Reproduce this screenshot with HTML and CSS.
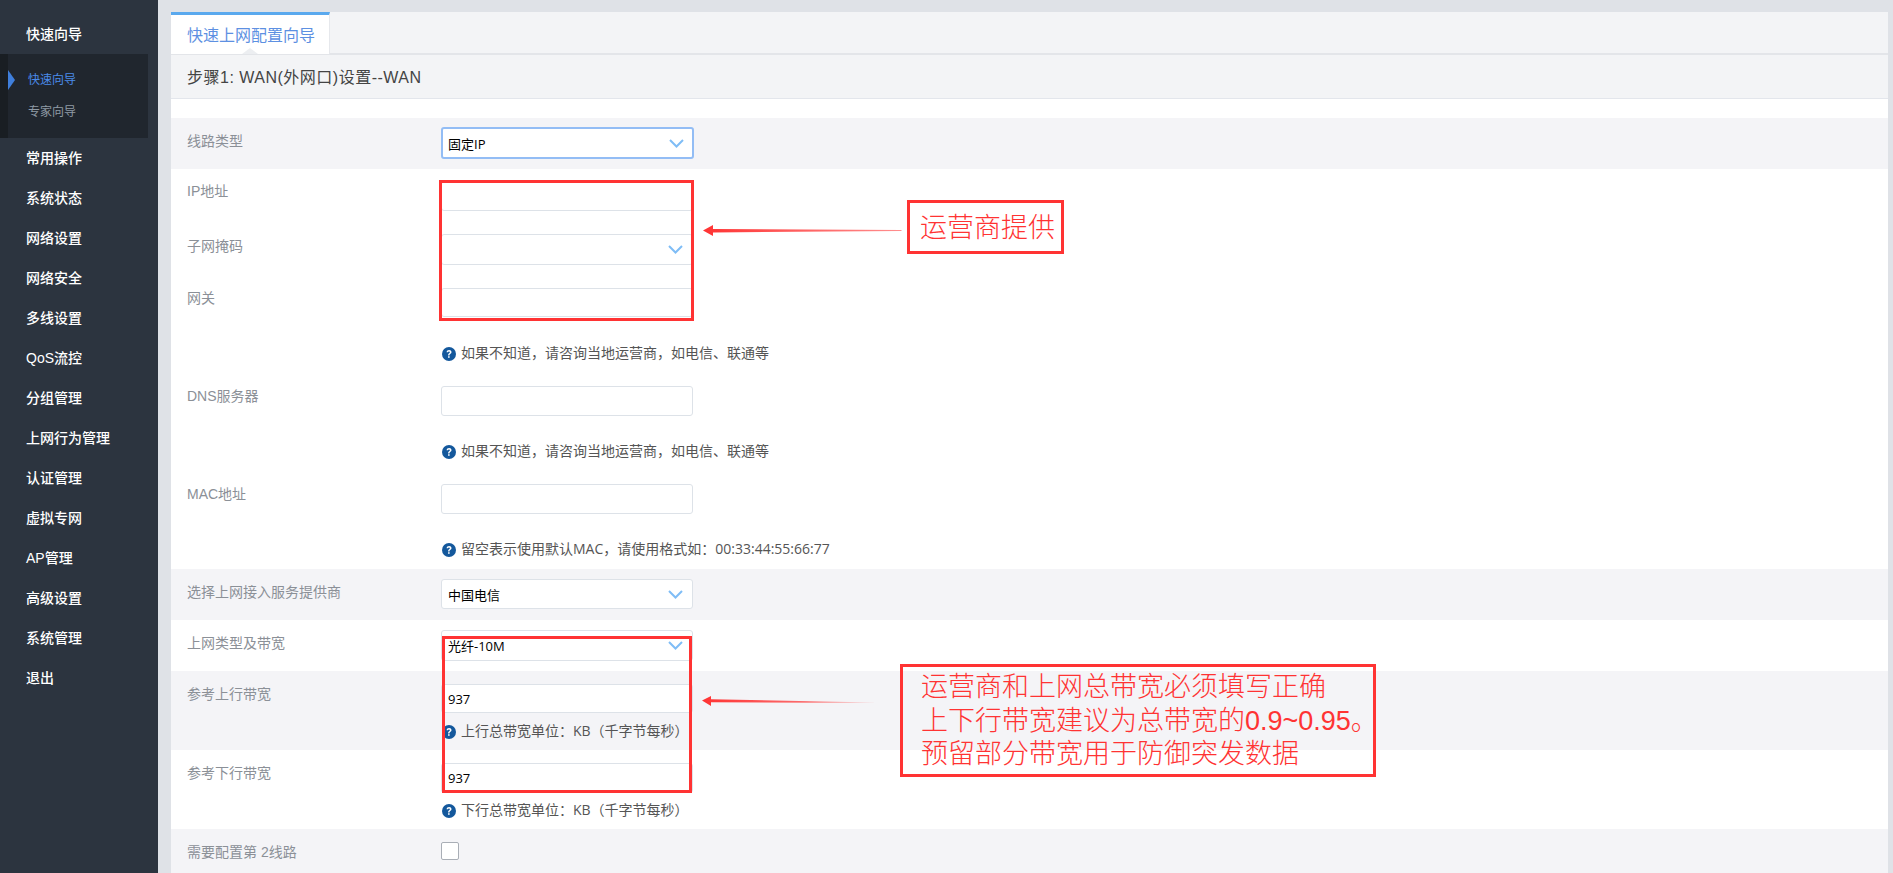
FILE: index.html
```html
<!DOCTYPE html>
<html lang="zh-CN">
<head>
<meta charset="utf-8">
<title>快速上网配置向导</title>
<link rel="stylesheet" href="styles.css">
</head>
<body>
<svg class="defs" width="0" height="0" aria-hidden="true">
  <defs>
    <symbol id="chev" viewBox="0 0 15 9"><path d="M1 1l6.5 6.5L14 1" fill="none" stroke="#7fbdf6" stroke-width="2"/></symbol>
    <symbol id="help" viewBox="0 0 14 14"><circle cx="7" cy="7" r="7" fill="#14589c"/><path d="M4.600 5.300C4.700 3.900 5.700 3.100 7.100 3.100c1.400 0 2.400.8 2.400 2 0 1-.6 1.500-1.200 1.900-.6.4-.8.7-.8 1.400H6.100c0-1.100.3-1.600 1-2.100.5-.4.8-.6.8-1.100 0-.5-.4-.8-.9-.8-.6 0-.9.4-1 .9H4.600z" fill="#fff"/><rect x="6.100" y="9.200" width="1.500" height="1.600" fill="#fff"/></symbol>
    <linearGradient id="fade" x1="0" x2="1" y1="0" y2="0">
      <stop offset="0" stop-color="#f33"/><stop offset=".55" stop-color="#f33" stop-opacity=".75"/><stop offset="1" stop-color="#f33" stop-opacity=".55"/>
    </linearGradient>
    <linearGradient id="fade2" x1="0" x2="1" y1="0" y2="0">
      <stop offset="0" stop-color="#f33"/><stop offset=".6" stop-color="#f33" stop-opacity=".7"/><stop offset="1" stop-color="#f33" stop-opacity=".05"/>
    </linearGradient>
  </defs>
</svg>

<aside class="sidebar">
  <nav class="menu">
    <a class="menu-item">快速向导</a>
    <div class="submenu">
      <a class="sub-item sub-item--active">快速向导</a>
      <a class="sub-item">专家向导</a>
    </div>
    <a class="menu-item">常用操作</a>
    <a class="menu-item">系统状态</a>
    <a class="menu-item">网络设置</a>
    <a class="menu-item">网络安全</a>
    <a class="menu-item">多线设置</a>
    <a class="menu-item">QoS流控</a>
    <a class="menu-item">分组管理</a>
    <a class="menu-item">上网行为管理</a>
    <a class="menu-item">认证管理</a>
    <a class="menu-item">虚拟专网</a>
    <a class="menu-item">AP管理</a>
    <a class="menu-item">高级设置</a>
    <a class="menu-item">系统管理</a>
    <a class="menu-item">退出</a>
  </nav>
</aside>

<main class="main">
  <div class="card">
    <div class="tabs"><div class="tab">快速上网配置向导</div></div>
    <h1 class="step">步骤1: WAN(外网口)设置--WAN</h1>

    <section class="row row--band row--type">
      <label class="label">线路类型</label>
      <div class="ctl ctl--focus ctl--h32"><span>固定IP</span><svg class="chev"><use href="#chev"/></svg></div>
    </section>

    <section class="group">
      <div class="row row--field">
        <label class="label">IP地址</label>
        <div class="ctl"></div>
      </div>
      <div class="row row--field">
        <label class="label label--low">子网掩码</label>
        <div class="ctl ctl--h31"><span></span><svg class="chev"><use href="#chev"/></svg></div>
      </div>
      <div class="row">
        <label class="label">网关</label>
        <div class="ctl ctl--h29"></div>
      </div>
      <div class="tip tip--gap27"><svg class="help"><use href="#help"/></svg>如果不知道，请咨询当地运营商，如电信、联通等</div>
      <div class="row row--after-tip">
        <label class="label">DNS服务器</label>
        <div class="ctl"></div>
      </div>
      <div class="tip tip--gap26"><svg class="help"><use href="#help"/></svg>如果不知道，请咨询当地运营商，如电信、联通等</div>
      <div class="row row--after-tip">
        <label class="label">MAC地址</label>
        <div class="ctl"></div>
      </div>
      <div class="tip tip--gap26"><svg class="help"><use href="#help"/></svg>留空表示使用默认MAC，请使用格式如：00:33:44:55:66:77</div>
    </section>

    <section class="row row--band row--isp">
      <label class="label label--drop">选择上网接入服务提供商</label>
      <div class="ctl"><span>中国电信</span><svg class="chev"><use href="#chev"/></svg></div>
    </section>

    <section class="row row--plain row--line">
      <label class="label label--drop">上网类型及带宽</label>
      <div class="ctl ctl--h31"><span>光纤-10M</span><svg class="chev"><use href="#chev"/></svg></div>
    </section>

    <section class="stack stack--band stack--up">
      <div class="row">
        <label class="label">参考上行带宽</label>
        <div class="ctl ctl--h29"><span>937</span></div>
      </div>
      <div class="tip tip--gap9"><svg class="help"><use href="#help"/></svg>上行总带宽单位：KB（千字节每秒）</div>
    </section>

    <section class="stack stack--down">
      <div class="row">
        <label class="label">参考下行带宽</label>
        <div class="ctl"><span>937</span></div>
      </div>
      <div class="tip tip--gap8"><svg class="help"><use href="#help"/></svg>下行总带宽单位：KB（千字节每秒）</div>
    </section>

    <section class="stack stack--band stack--second">
      <div class="row">
        <label class="label">需要配置第 2线路</label>
        <span class="check"></span>
      </div>
      <div class="tip tip--gap9"><svg class="help"><use href="#help"/></svg>勾选此选项后可配置第二条线路，配置后请在多线设置页面中完成线路参数</div>
    </section>
  </div>
</main>

<div class="mark mark--a"></div>
<svg class="arrow arrow--a" viewBox="0 0 199 11"><path d="M0 5.500L10 0V4L198.500 5V6L10 7.500V11z" fill="url(#fade)"/></svg>
<div class="note note--a">运营商提供</div>

<div class="mark mark--b"></div>
<svg class="arrow arrow--b" viewBox="0 0 172 10"><path d="M0 4.500L9 0V3.200L172 6.500V7L9 6.200V10z" fill="url(#fade2)"/></svg>
<div class="note note--b">运营商和上网总带宽必须填写正确<br>上下行带宽建议为总带宽的0.9~0.95。<br>预留部分带宽用于防御突发数据</div>
</body>
</html>
```

FILE: styles.css
```css
* { box-sizing: border-box; }

html, body {
  margin: 0;
  height: 873px;
  overflow: hidden;
}

body {
  display: flex;
  position: relative;
  background: #dfe2e7;
  font-family: "Liberation Sans", "Noto Sans CJK SC", sans-serif;
  font-size: 14px;
  color: #333;
}

.defs { position: absolute; }

/* Sidebar */
.sidebar {
  flex: 0 0 158px;
  background: #2c343f;
}

.menu { padding-top: 14px; }

.menu-item {
  display: block;
  height: 40px;
  padding-left: 26px;
  line-height: 40px;
  font-size: 14px;
  font-weight: 500;
  color: #fff;
}

.submenu {
  position: relative;
  width: 148px;
  height: 84px;
  padding: 10px 0 10px 20px;
  background: #20262e;
  border-left: 8px solid #191e23;
}

.sub-item {
  display: block;
  height: 32px;
  line-height: 32px;
  font-size: 12px;
  color: #8f9aa5;
}

.sub-item--active { color: #4a8bea; }

.sub-item--active::before {
  content: "";
  position: absolute;
  left: 0;
  top: 16px;
  border-left: 7px solid #3f7fdc;
  border-top: 10px solid transparent;
  border-bottom: 10px solid transparent;
}

/* Main */
.main {
  flex: 1;
  padding: 12px 5px 0 13px;
  min-width: 0;
}

.card {
  height: 861px;
  overflow: hidden;
  background: #fff;
}

.tabs {
  height: 43px;
  background: #f3f4f6;
  border-bottom: 2px solid #e3e5e9;
}

.tab {
  position: relative;
  width: 159px;
  height: 42px;
  padding-left: 16px;
  background: #fff;
  border-top: 3px solid #5aa9ee;
  border-right: 1px solid #e6e8ec;
  line-height: 41px;
  font-size: 16px;
  color: #5d90e2;
}

.tab::after {
  content: "";
  position: absolute;
  left: 71px;
  bottom: 0;
  border-left: 8px solid transparent;
  border-right: 8px solid transparent;
  border-bottom: 6px solid #eceef1;
}

.step {
  height: 44px;
  margin: 0 0 19px;
  padding-left: 16px;
  background: #f3f4f6;
  border-bottom: 1px solid #e3e6ec;
  line-height: 45px;
  font-size: 16px;
  font-weight: 400;
  letter-spacing: .5px;
  color: #444;
}

/* Rows */
.row {
  display: grid;
  grid-template-columns: 254px 252px;
  padding-left: 16px;
}

.row--band { background: #f4f4f7; }

.row--type { height: 51px; padding-top: 9px; }
.row--type .label { margin-top: 3px; }
.row--isp { height: 51px; padding-top: 10px; }
.row--line { height: 51px; padding-top: 10px; }
.row--field { margin-bottom: 23px; }
.row--after-tip { margin-top: 22px; }

.label {
  height: 22px;
  margin-top: -1px;
  line-height: 22px;
  font-size: 14px;
  color: #8b9097;
}

.label--low { margin-top: 1px; }
.label--drop { margin-top: 2px; }

.ctl {
  display: flex;
  align-items: center;
  justify-content: space-between;
  height: 30px;
  padding: 0 9px 0 6px;
  background: #fff;
  border: 1px solid #dde2e8;
  border-radius: 3px;
  font-family: "Open Sans", "Noto Sans CJK SC", sans-serif;
  font-size: 13px;
  color: #000;
}

.ctl--h29 { height: 29px; }
.ctl--h31 { height: 31px; }
.ctl--h32 { height: 32px; }

.ctl--focus {
  margin-right: -1px;
  border: 2px solid #93bdf5;
  padding-left: 5px;
  padding-right: 8px;
}

.chev {
  width: 15px;
  height: 9px;
  flex: none;
}

.group {
  height: 400px;
  padding-top: 12px;
}

.stack--band { background: #f4f4f7; }
.stack--up { height: 79px; padding-top: 13px; }
.stack--down { height: 79px; padding-top: 13px; }
.stack--second { height: 70px; padding-top: 13px; }

.tip {
  display: flex;
  align-items: flex-start;
  gap: 5px;
  height: 20px;
  padding-left: 271px;
  line-height: 18px;
  font-family: "Open Sans", "Noto Sans CJK SC", sans-serif;
  font-size: 14px;
  color: #555;
}

.tip--gap27 { margin-top: 27px; }
.tip--gap26 { margin-top: 26px; }
.tip--gap9 { margin-top: 9px; }
.tip--gap8 { margin-top: 8px; }

.help {
  width: 14px;
  height: 14px;
  margin-top: 3px;
  flex: none;
}

.check {
  width: 18px;
  height: 18px;
  background: #fff;
  border: 1px solid #a9aeb6;
  border-radius: 2px;
}

/* Annotations drawn over the page */
.mark {
  position: absolute;
  border: 3px solid #f33;
}

.mark--a { left: 439px; top: 180px; width: 255px; height: 141px; }
.mark--b { left: 442px; top: 636px; width: 250px; height: 157px; }

.arrow { position: absolute; }
.arrow--a { left: 703px; top: 225px; width: 199px; height: 11px; }
.arrow--b { left: 702px; top: 696px; width: 172px; height: 10px; }

.note {
  position: absolute;
  border: 3px solid #f33;
  font-family: "Liberation Sans", "Noto Sans CJK SC", sans-serif;
  font-weight: 300;
  font-size: 27px;
  color: #f33;
}

.note--a {
  left: 907px;
  top: 200px;
  width: 157px;
  height: 54px;
  padding-left: 10px;
  line-height: 50px;
  white-space: nowrap;
}

.note--b {
  left: 900px;
  top: 664px;
  width: 476px;
  height: 113px;
  padding: 4px 0 0 18px;
  line-height: 33.500px;
  white-space: nowrap;
}
```
